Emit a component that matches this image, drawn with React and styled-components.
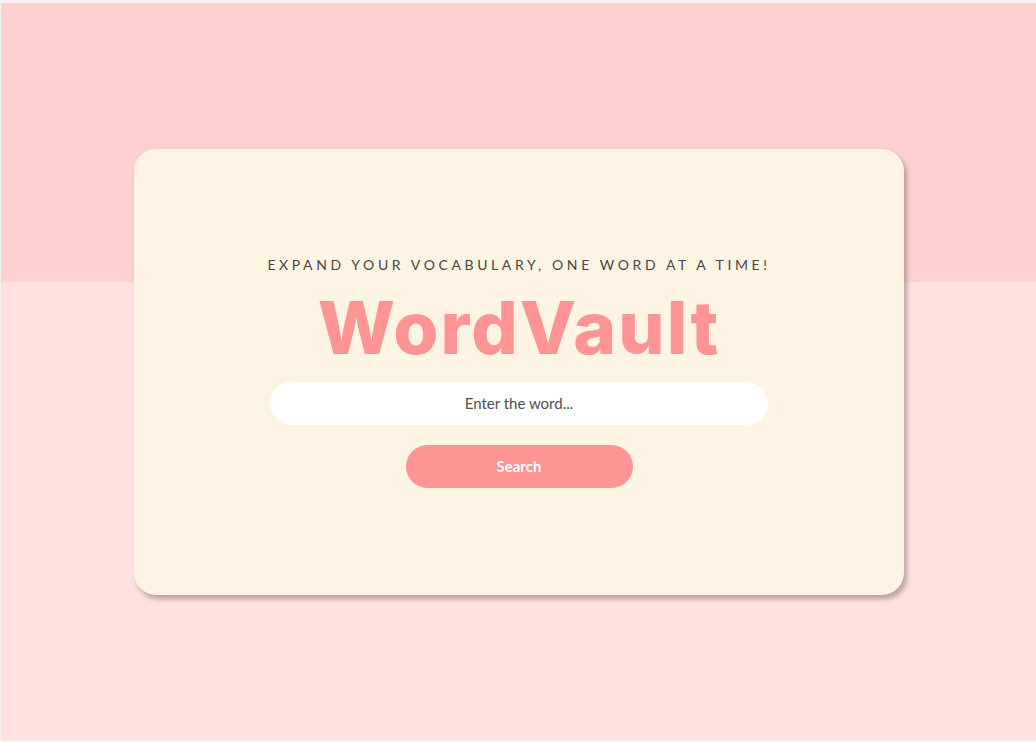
import React, { useState } from 'react';
import styled, { createGlobalStyle } from 'styled-components';

const GlobalStyle = createGlobalStyle`
  * {
    box-sizing: border-box;
  }
  html, body {
    height: 100%;
  }
  body {
    margin: 0;
    padding: 3px 0 2px 1px;
    background: #f3f1f1;
    font-family: "Lato", "Open Sans", sans-serif;
  }
`;

const Page = styled.div`
  height: calc(100vh - 5px);
  display: flex;
  align-items: center;
  justify-content: center;
  background: linear-gradient(to bottom, #ffd0d0 0, #ffd0d0 279px, #ffe1e0 279px, #ffe1e0 100%);
`;

const Card = styled.div`
  width: 770px;
  height: 446px;
  margin-left: 1px;
  background: #fef4e3;
  border-radius: 22px;
  box-shadow: 3px 4px 5px rgba(110, 80, 80, 0.45);
  display: flex;
  flex-direction: column;
  align-items: center;
  justify-content: center;
  padding-top: 2px;
`;

const Tagline = styled.p`
  margin: 0;
  font-family: "Lato", sans-serif;
  font-size: 14px;
  font-weight: 400;
  letter-spacing: 3.6px;
  color: #4a4444;
  text-transform: uppercase;
  line-height: 1;
`;

const Title = styled.h1`
  margin: 12px 0 10px;
  font-family: "Inter", "Open Sans", sans-serif;
  font-size: 73px;
  font-weight: 800;
  letter-spacing: 2px;
  line-height: 88px;
  color: #ff9494;
`;

const SearchForm = styled.form`
  display: flex;
  flex-direction: column;
  align-items: center;
  gap: 20px;
`;

const WordInput = styled.input`
  width: 498px;
  height: 43px;
  border: 0;
  border-radius: 22px;
  background: #fff;
  text-align: center;
  font-family: "Lato", sans-serif;
  font-size: 15px;
  color: #444;
  outline: none;

  &::placeholder {
    color: #4e4e4e;
  }
`;

const SearchButton = styled.button`
  width: 227px;
  height: 43px;
  border: 0;
  border-radius: 22px;
  background: #ff9494;
  color: #fff;
  font-family: "Lato", sans-serif;
  font-size: 15px;
  font-weight: 700;
  cursor: pointer;
`;

export default function App() {
  const [word, setWord] = useState('');

  return (
    <>
      <GlobalStyle />
      <Page>
        <Card>
          <Tagline>Expand your vocabulary, one word at a time!</Tagline>
          <Title>WordVault</Title>
          <SearchForm onSubmit={(e) => e.preventDefault()}>
            <WordInput
              value={word}
              onChange={(e) => setWord(e.target.value)}
              placeholder="Enter the word..."
            />
            <SearchButton type="submit">Search</SearchButton>
          </SearchForm>
        </Card>
      </Page>
    </>
  );
}
